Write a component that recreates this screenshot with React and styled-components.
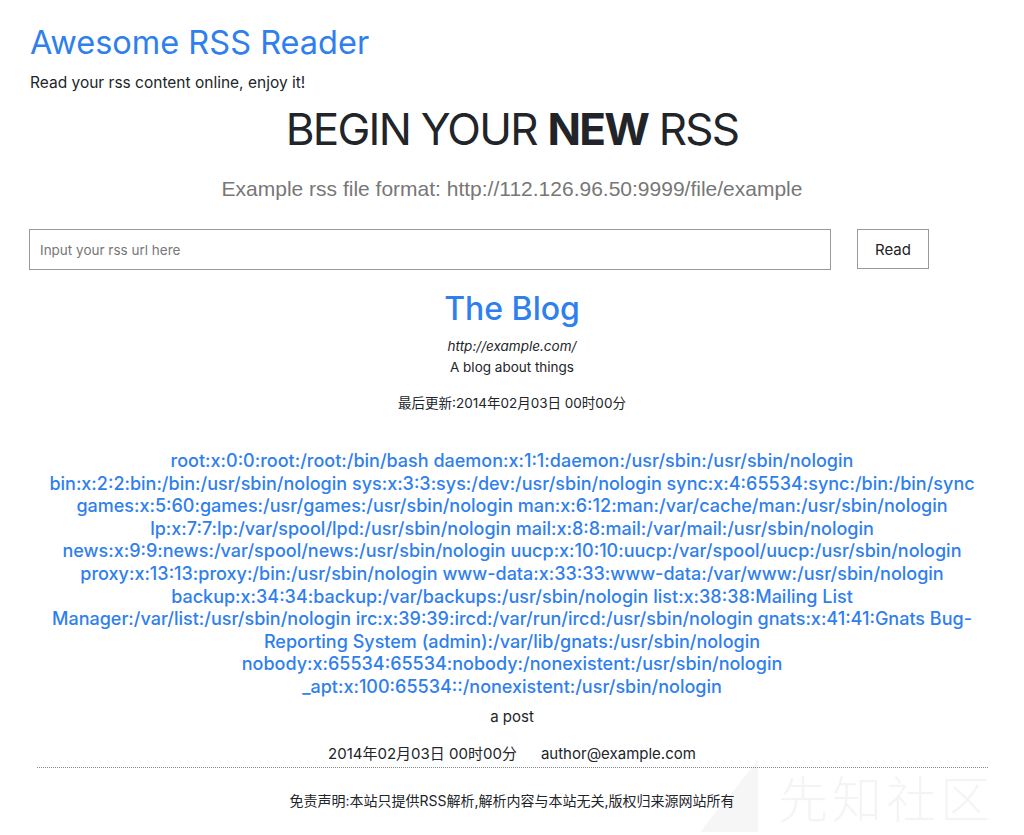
import styled, { createGlobalStyle } from "styled-components";

const GlobalStyle = createGlobalStyle`
  html, body {
    margin: 0;
    padding: 0;
    background: #fff;
  }
  body {
    font-family: Inter, "Noto Sans CJK SC", sans-serif;
    color: #212529;
  }
`;

const Page = styled.div`
  position: relative;
  min-height: 835px;
  overflow: hidden;
`;

const Header = styled.header`
  padding: 23px 30px 0;
`;

const SiteTitle = styled.h1`
  margin: 0;
  font-size: 32.5px;
  font-weight: 400;
  line-height: 40px;
  color: #2f80ed;
`;

const Tagline = styled.p`
  margin: 10px 0 0;
  font-size: 15.5px;
  line-height: 20px;
`;

const Hero = styled.section`
  text-align: center;
`;

const HeroTitle = styled.h2`
  margin: 8px 0 0;
  font-size: 44px;
  font-weight: 400;
  line-height: 56px;
  letter-spacing: -1.75px;

  strong {
    font-weight: 700;
  }
`;

const Example = styled.p`
  margin: 20px 0 0;
  font-family: "Liberation Sans", Arial, sans-serif;
  font-size: 21px;
  line-height: 24px;
  color: #777;
`;

const Form = styled.form`
  display: flex;
  align-items: flex-start;
  gap: 26px;
  padding: 0 29px;
  margin-top: 28px;
`;

const Input = styled.input`
  box-sizing: border-box;
  width: 802px;
  height: 41px;
  padding: 0 10px;
  border: 1px solid #999;
  font-family: Inter, sans-serif;
  font-size: 13.5px;
  outline: none;

  &::placeholder {
    color: #777;
  }
`;

const Button = styled.button`
  box-sizing: border-box;
  width: 72px;
  height: 40px;
  background: #fff;
  border: 1px solid #999;
  font-family: Inter, sans-serif;
  font-size: 15px;
  color: #222;
`;

const Feed = styled.section`
  text-align: center;
  margin-top: 19px;
`;

const FeedTitle = styled.h3`
  margin: 0;
  font-size: 32px;
  font-weight: 500;
  line-height: 40px;
  color: #2f80ed;
`;

const FeedLink = styled.div`
  margin-top: 7px;
  font-size: 13.5px;
  font-style: italic;
  line-height: 20px;
`;

const FeedDesc = styled.div`
  font-size: 13.5px;
  line-height: 22px;
`;

const Updated = styled.div`
  margin-top: 15px;
  font-size: 13.5px;
  line-height: 20px;
`;

const PostTitle = styled.div`
  margin: 37px auto 0;
  max-width: 930px;
  font-size: 18px;
  font-weight: 500;
  line-height: 22.6px;
  color: #2f80ed;
`;

const PostSummary = styled.div`
  margin-top: 8px;
  font-size: 15px;
  line-height: 20px;
`;

const PostMeta = styled.div`
  margin-top: 17px;
  font-size: 15px;
  line-height: 20px;

  span + span {
    margin-left: 24px;
  }
`;

const Divider = styled.hr`
  margin: 3px 36px 0 37px;
  border: 0;
  border-top: 1px dotted #888;
`;

const Disclaimer = styled.footer`
  margin-top: 23px;
  text-align: center;
  font-size: 14px;
  line-height: 20px;
`;

const Watermark = styled.div`
  position: absolute;
  left: 700px;
  top: 760px;
  display: flex;
  align-items: center;
  gap: 20px;
  pointer-events: none;
  color: rgba(0, 0, 0, 0.045);
  font-family: "Noto Sans CJK SC", sans-serif;
  font-size: 50px;
  font-weight: 300;
  line-height: 1;
  letter-spacing: 4px;
`;

function App() {
  return (
    <Page>
      <GlobalStyle />
      <Header>
        <SiteTitle>Awesome RSS Reader</SiteTitle>
        <Tagline>Read your rss content online, enjoy it!</Tagline>
      </Header>
      <Hero>
        <HeroTitle>
          BEGIN YOUR <strong>NEW</strong> RSS
        </HeroTitle>
        <Example>Example rss file format: http://112.126.96.50:9999/file/example</Example>
      </Hero>
      <Form onSubmit={(e) => e.preventDefault()}>
        <Input placeholder="Input your rss url here" />
        <Button type="submit">Read</Button>
      </Form>
      <Feed>
        <FeedTitle>The Blog</FeedTitle>
        <FeedLink>http://example.com/</FeedLink>
        <FeedDesc>A blog about things</FeedDesc>
        <Updated>最后更新:2014年02月03日 00时00分</Updated>
        <PostTitle>
          root:x:0:0:root:/root:/bin/bash daemon:x:1:1:daemon:/usr/sbin:/usr/sbin/nologin
          bin:x:2:2:bin:/bin:/usr/sbin/nologin sys:x:3:3:sys:/dev:/usr/sbin/nologin
          sync:x:4:65534:sync:/bin:/bin/sync games:x:5:60:games:/usr/games:/usr/sbin/nologin
          man:x:6:12:man:/var/cache/man:/usr/sbin/nologin lp:x:7:7:lp:/var/spool/lpd:/usr/sbin/nologin
          mail:x:8:8:mail:/var/mail:/usr/sbin/nologin
          news:x:9:9:news:/var/spool/news:/usr/sbin/nologin
          uucp:x:10:10:uucp:/var/spool/uucp:/usr/sbin/nologin
          proxy:x:13:13:proxy:/bin:/usr/sbin/nologin
          www-data:x:33:33:www-data:/var/www:/usr/sbin/nologin
          backup:x:34:34:backup:/var/backups:/usr/sbin/nologin list:x:38:38:Mailing List
          Manager:/var/list:/usr/sbin/nologin irc:x:39:39:ircd:/var/run/ircd:/usr/sbin/nologin
          gnats:x:41:41:Gnats Bug-Reporting System (admin):/var/lib/gnats:/usr/sbin/nologin
          nobody:x:65534:65534:nobody:/nonexistent:/usr/sbin/nologin
          _apt:x:100:65534::/nonexistent:/usr/sbin/nologin
        </PostTitle>
        <PostSummary>a post</PostSummary>
        <PostMeta>
          <span>2014年02月03日 00时00分</span>
          <span>author@example.com</span>
        </PostMeta>
      </Feed>
      <Divider />
      <Disclaimer>免责声明:本站只提供RSS解析,解析内容与本站无关,版权归来源网站所有</Disclaimer>
      <Watermark>
        <svg width="58" height="72" viewBox="0 0 58 72">
          <polygon points="58,0 58,72 0,72" fill="rgba(0,0,0,0.035)" />
        </svg>
        <span>先知社区</span>
      </Watermark>
    </Page>
  );
}

export default App;
